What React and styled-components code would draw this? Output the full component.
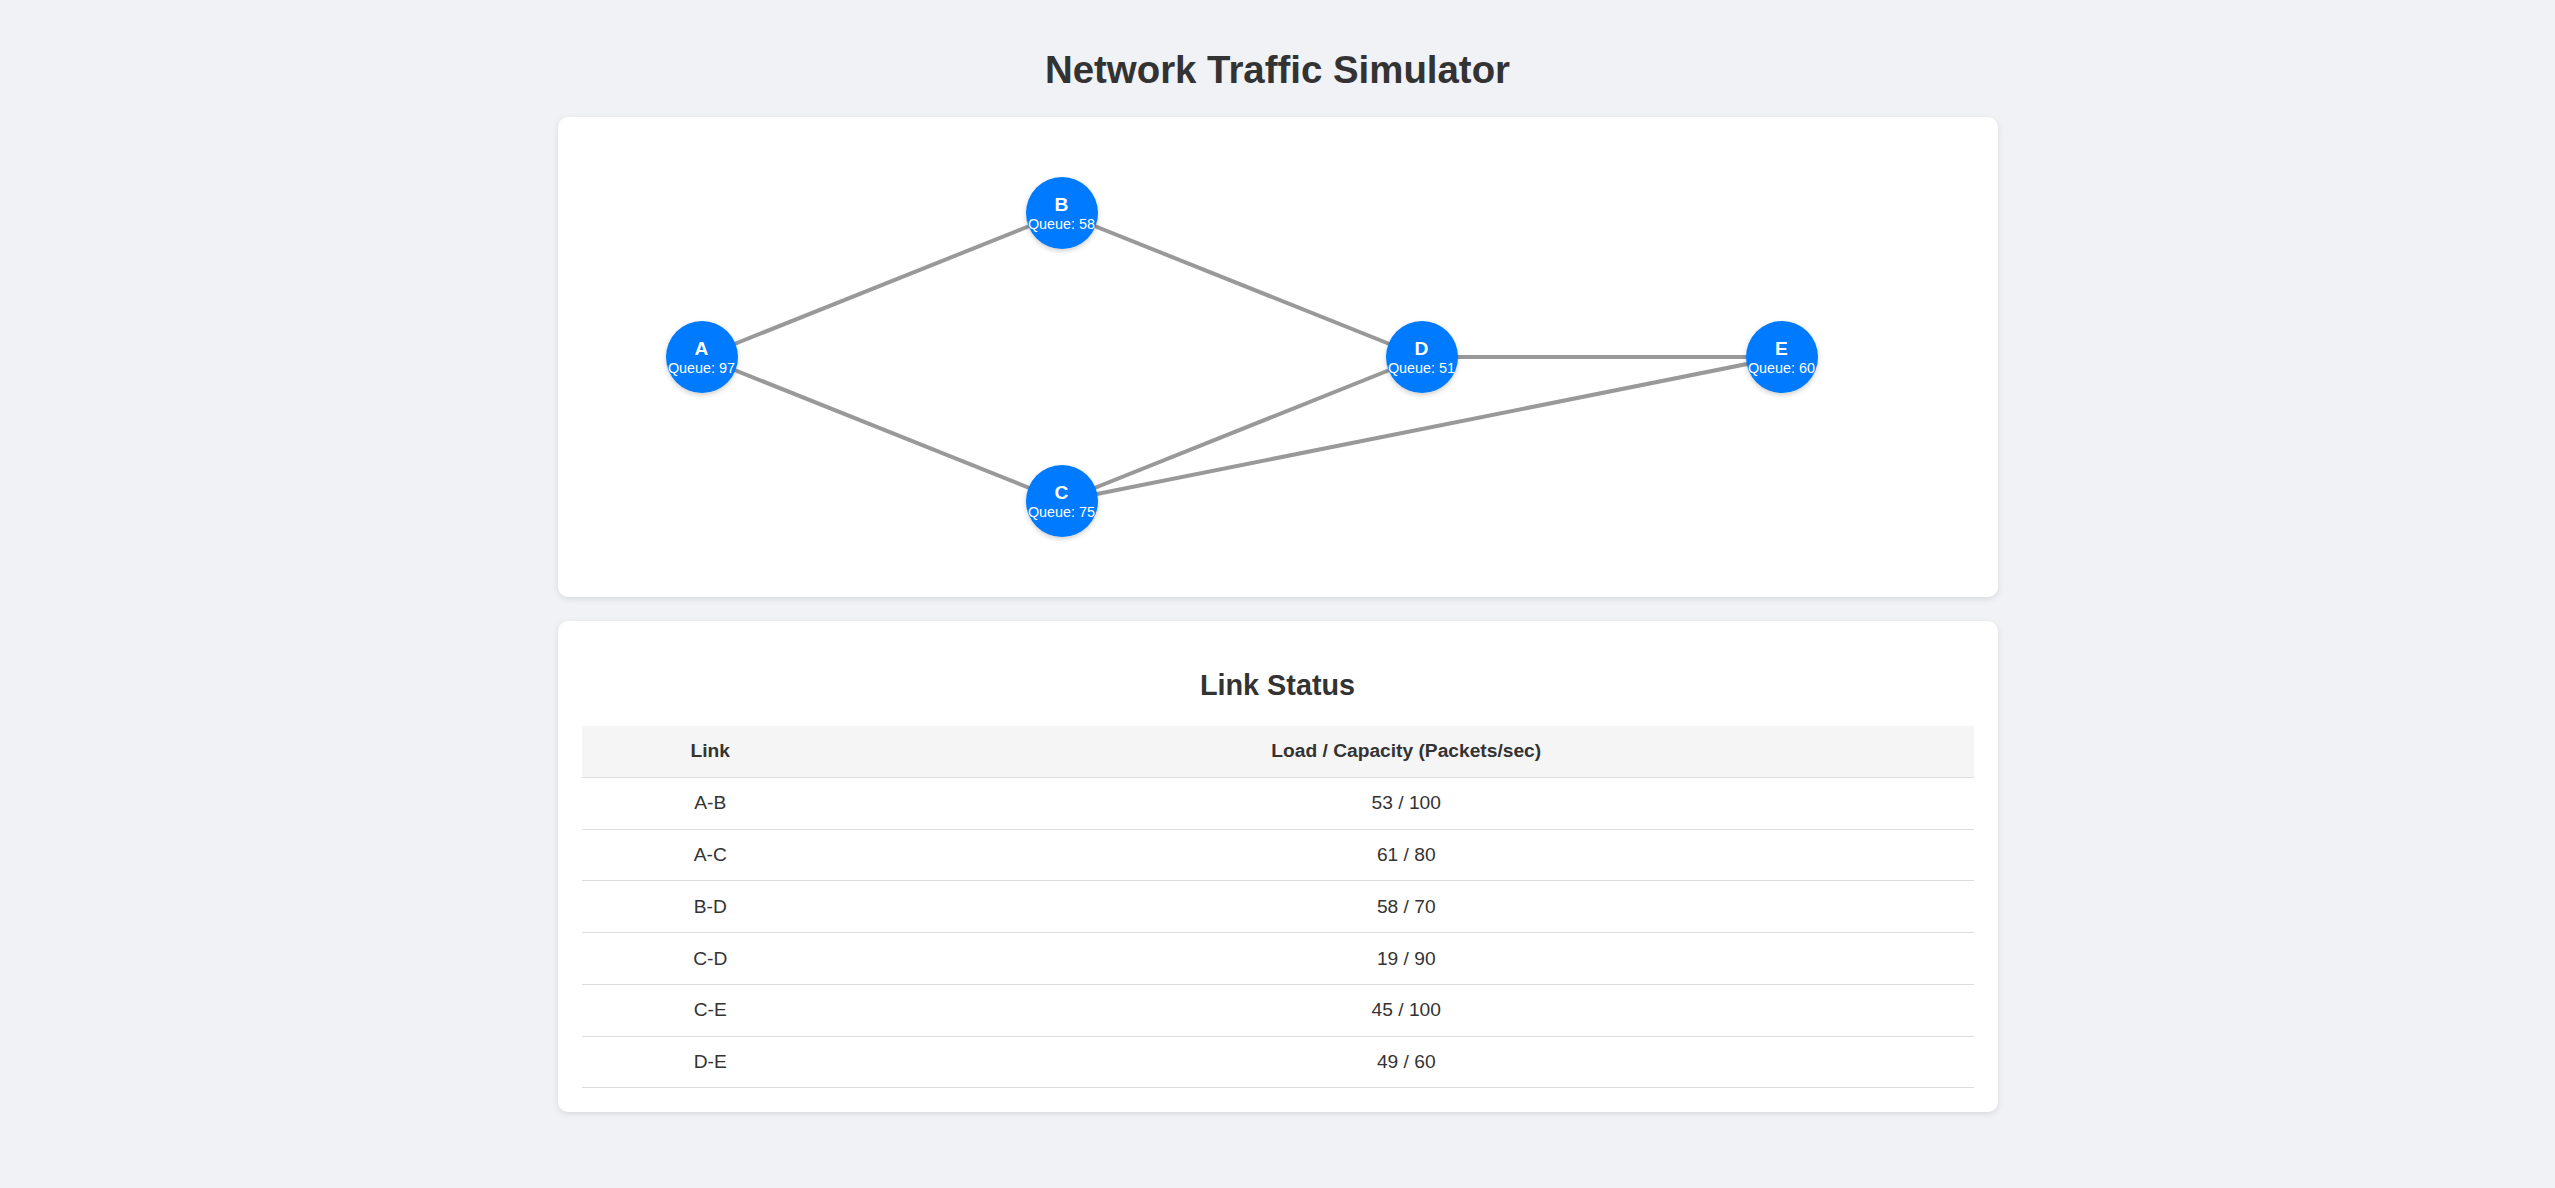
import React from "react";
import styled, { createGlobalStyle } from "styled-components";

const nodes = [
  { id: "A", x: 120, y: 216, queue: 97 },
  { id: "B", x: 480, y: 72, queue: 58 },
  { id: "C", x: 480, y: 360, queue: 75 },
  { id: "D", x: 840, y: 216, queue: 51 },
  { id: "E", x: 1200, y: 216, queue: 60 },
];

const links = [
  { from: "A", to: "B", load: 53, capacity: 100 },
  { from: "A", to: "C", load: 61, capacity: 80 },
  { from: "B", to: "D", load: 58, capacity: 70 },
  { from: "C", to: "D", load: 19, capacity: 90 },
  { from: "C", to: "E", load: 45, capacity: 100 },
  { from: "D", to: "E", load: 49, capacity: 60 },
];

const GlobalStyle = createGlobalStyle`
  body {
    margin: 0;
    background: #f0f2f5;
    font-family: "Liberation Sans", Arial, sans-serif;
    color: #333;
  }
`;

const Page = styled.div`
  width: 1440px;
  margin: 0 auto;
  padding: 24px 0;
`;

const Title = styled.h1`
  margin: 24px 0 25px;
  font-size: 38.4px;
  font-weight: bold;
  text-align: center;
  color: #333;
`;

const Card = styled.section`
  background: #fff;
  border-radius: 10px;
  box-shadow: 0 2px 6px rgba(0, 0, 0, 0.1);
  padding: 24px;
  margin-bottom: 24px;
`;

const Graph = styled.div`
  position: relative;
  height: 432px;
`;

const Edges = styled.svg`
  position: absolute;
  inset: 0;
  width: 100%;
  height: 100%;
`;

const Node = styled.div`
  position: absolute;
  width: 72px;
  height: 72px;
  margin: -36px 0 0 -36px;
  border-radius: 50%;
  background: #007bff;
  color: #fff;
  box-shadow: 0 2px 5px rgba(0, 0, 0, 0.2);
  display: flex;
  flex-direction: column;
  align-items: center;
  justify-content: center;
  white-space: nowrap;
`;

const NodeName = styled.div`
  font-size: 19.2px;
  font-weight: bold;
`;

const NodeQueue = styled.div`
  font-size: 14.4px;
`;

const Heading = styled.h2`
  margin: 24px 0;
  font-size: 28.8px;
  font-weight: bold;
  text-align: center;
`;

const Table = styled.table`
  width: 100%;
  border-collapse: collapse;
  font-size: 19.2px;
`;

const Th = styled.th`
  width: ${(p) => p.$w || "auto"};
  padding: 14.4px;
  background: #f5f5f5;
  border-bottom: 1px solid #ddd;
  font-weight: bold;
  text-align: center;
`;

const Td = styled.td`
  padding: 14.4px;
  border-bottom: 1px solid #ddd;
  text-align: center;
`;

const byId = Object.fromEntries(nodes.map((n) => [n.id, n]));

const App = () => (
  <>
    <GlobalStyle />
    <Page>
      <Title>Network Traffic Simulator</Title>
      <Card>
        <Graph>
          <Edges>
            {links.map((l) => (
              <line
                key={l.from + l.to}
                x1={byId[l.from].x}
                y1={byId[l.from].y}
                x2={byId[l.to].x}
                y2={byId[l.to].y}
                stroke="#999"
                strokeWidth="4"
              />
            ))}
          </Edges>
          {nodes.map((n) => (
            <Node key={n.id} style={{ left: n.x, top: n.y }}>
              <NodeName>{n.id}</NodeName>
              <NodeQueue>Queue: {n.queue}</NodeQueue>
            </Node>
          ))}
        </Graph>
      </Card>
      <Card>
        <Heading>Link Status</Heading>
        <Table>
          <thead>
            <tr>
              <Th $w="18.5%">Link</Th>
              <Th>Load / Capacity (Packets/sec)</Th>
            </tr>
          </thead>
          <tbody>
            {links.map((l) => (
              <tr key={l.from + l.to}>
                <Td>
                  {l.from}-{l.to}
                </Td>
                <Td>
                  {l.load} / {l.capacity}
                </Td>
              </tr>
            ))}
          </tbody>
        </Table>
      </Card>
    </Page>
  </>
);

export default App;
